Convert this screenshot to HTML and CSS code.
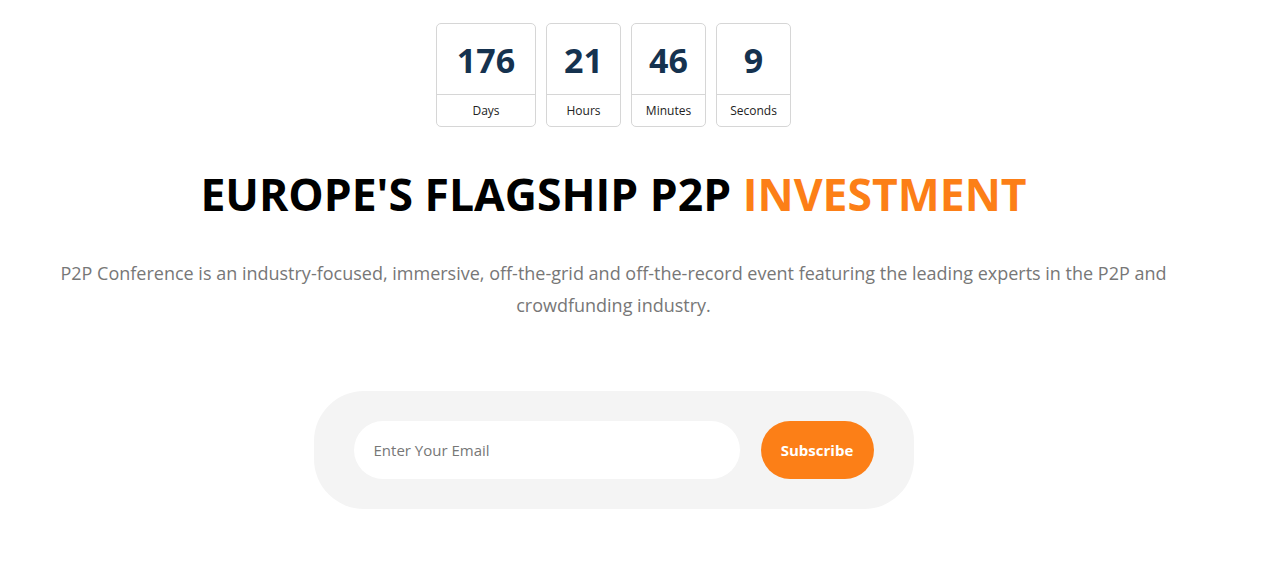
FILE: index.html
```html
<!DOCTYPE html>
<html lang="en">
<head>
<meta charset="utf-8">
<title>P2P Conference</title>
<link rel="stylesheet" href="styles.css">
</head>
<body>
<main class="page">
  <section class="countdown">
    <div class="cd-box cd-wide"><div class="cd-num">176</div><div class="cd-label">Days</div></div>
    <div class="cd-box"><div class="cd-num">21</div><div class="cd-label">Hours</div></div>
    <div class="cd-box"><div class="cd-num">46</div><div class="cd-label">Minutes</div></div>
    <div class="cd-box"><div class="cd-num">9</div><div class="cd-label">Seconds</div></div>
  </section>
  <h1 class="title">EUROPE'S FLAGSHIP P2P <span class="accent">INVESTMENT</span></h1>
  <p class="lead">P2P Conference is an industry-focused, immersive, off-the-grid and off-the-record event featuring the leading experts in the P2P and crowdfunding industry.</p>
  <form class="subscribe">
    <input class="email" type="email" placeholder="Enter Your Email">
    <button class="btn" type="button">Subscribe</button>
  </form>
</main>
</body>
</html>
```

FILE: styles.css
```css
* { box-sizing: border-box; }
html, body { margin: 0; padding: 0; background: #fff; }
body { font-family: "Open Sans", "Noto Sans", sans-serif; }
.page {
  width: 1227px;
  display: flex;
  flex-direction: column;
  align-items: center;
  padding-top: 23px;
}
.countdown { display: flex; gap: 10px; }
.cd-box {
  width: 75px;
  height: 104px;
  border: 1px solid #d6d6d6;
  border-radius: 5px;
  display: flex;
  flex-direction: column;
}
.cd-wide { width: 100px; }
.cd-num {
  height: 71px;
  border-bottom: 1px solid #d6d6d6;
  display: flex;
  align-items: center;
  justify-content: center;
  font-size: 34px;
  font-weight: 700;
  color: #15324f;
  padding-top: 2px;
}
.cd-label {
  flex: 1;
  display: flex;
  align-items: center;
  justify-content: center;
  font-size: 12px;
  color: #222;
}
.title {
  margin: 40px 0 0;
  font-size: 44.5px;
  font-weight: 700;
  color: #000;
  line-height: 1.2;
}
.accent { color: #fc7f17; }
.lead {
  margin: 37px 0 0;
  width: 1140px;
  text-align: center;
  font-size: 18px;
  line-height: 32px;
  color: #777;
}
.subscribe {
  margin-top: 70px;
  width: 600px;
  height: 118px;
  background: #f4f4f4;
  border-radius: 50px;
  padding: 30px 40px;
  display: flex;
  gap: 21px;
}
.email {
  flex: 1;
  height: 58px;
  border: 0;
  border-radius: 30px;
  background: #fff;
  padding: 0 20px;
  font-family: inherit;
  font-size: 15px;
  color: #333;
  outline: none;
}
.email::placeholder { color: #777; }
.btn {
  width: 113px;
  height: 58px;
  border: 0;
  border-radius: 30px;
  background: #fc7f17;
  color: #fff;
  font-family: inherit;
  font-size: 15px;
  font-weight: 700;
  cursor: pointer;
}
```
